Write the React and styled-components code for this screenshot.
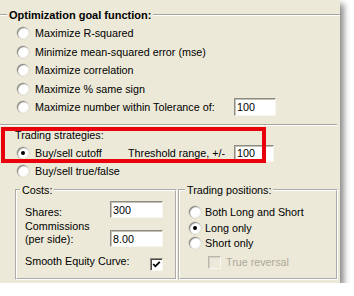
import React from 'react';
import styled, { createGlobalStyle } from 'styled-components';

const GlobalStyle = createGlobalStyle`
  html, body {
    margin: 0;
    padding: 0;
    background: #ffffff;
  }
  body {
    font-family: "Liberation Sans", Arial, sans-serif;
    font-size: 10.75px;
    color: #000000;
  }
`;

const Panel = styled.div`
  position: relative;
  width: 340px;
  height: 283px;
  background: #ece9d8;
  box-shadow: 4px 4px 6px rgba(0, 0, 0, 0.45);
  display: flex;
  flex-direction: column;
`;

const GroupHeader = styled.div`
  display: flex;
  align-items: center;
  height: 16px;
  margin-top: 7px;
`;

const Rule = styled.div`
  flex: ${p => (p.$width ? `0 0 ${p.$width}px` : '1 1 auto')};
  height: 0;
  border-top: 1px solid #a6a599;
  border-bottom: 1px solid #ffffff;
`;

const Caption = styled.span`
  font-weight: bold;
  font-size: 11px;
  line-height: 16px;
  padding: 0 2px;
  white-space: nowrap;
`;

const OptionList = styled.div`
  display: grid;
  grid-auto-rows: 18.5px;
  padding-top: 1px;
`;

const OptionRow = styled.div`
  display: flex;
  align-items: center;
  padding-left: ${p => (p.$indent === undefined ? 17 : p.$indent)}px;
`;

const Radio = styled.span`
  position: relative;
  flex: none;
  width: 12px;
  height: 12px;
  margin-right: ${p => p.$gap || 6}px;
  border-radius: 50%;
  background: #ffffff;
  box-shadow: inset 1px 1px 1px #7d7c74, inset -1px -1px 0 #f4f3ee, 0 0 0 0.5px #c9c7bb;

  &::after {
    content: '';
    display: ${p => (p.$checked ? 'block' : 'none')};
    position: absolute;
    left: 4px;
    top: 4px;
    width: 4px;
    height: 4px;
    border-radius: 50%;
    background: #000000;
  }
`;

const Label = styled.span`
  flex: none;
  white-space: nowrap;
  width: ${p => (p.$width ? `${p.$width}px` : 'auto')};
  color: ${p => (p.$disabled ? '#aca899' : '#000000')};
`;

const TextBox = styled.input`
  flex: none;
  box-sizing: border-box;
  width: ${p => p.$width}px;
  height: ${p => p.$height || 17}px;
  margin: 0;
  padding: 0 2px;
  font: inherit;
  color: #000000;
  background: #ffffff;
  border: 1px solid;
  border-color: #8d8c84 #f6f5f0 #f6f5f0 #8d8c84;
  box-shadow: inset 1px 1px 0 #c3c1b6;
  outline: none;
`;

const Separator = styled(Rule)`
  flex: none;
  width: 337px;
  margin-top: 7.5px;
`;

const Strategies = styled.div`
  display: flex;
  flex-direction: column;
`;

const StrategyTitle = styled.div`
  line-height: 18px;
  padding-left: 15px;
`;

const StrategyRow = styled(OptionRow)`
  height: 18px;
`;

const BottomRow = styled.div`
  display: flex;
  gap: 1px;
  margin-top: 3px;
  padding-left: 15px;
`;

const GroupBox = styled.fieldset`
  box-sizing: border-box;
  width: ${p => p.$width}px;
  height: 97px;
  margin: 0;
  padding: 0;
  min-width: 0;
  border: 2px groove #ffffff;
`;

const Legend = styled.legend`
  margin-left: ${p => p.$indent}px;
  padding: 0 2px;
  line-height: 14px;
`;

const CostsBody = styled.div`
  display: flex;
  flex-direction: column;
  padding: 0 12px 0 8px;
`;

const CostRow = styled.div`
  display: flex;
  justify-content: space-between;
  align-items: ${p => p.$align || 'flex-start'};
  margin-top: ${p => p.$top}px;
`;

const CostLabel = styled.span`
  line-height: 13px;
  padding-top: ${p => p.$padTop || 0}px;
  padding-bottom: ${p => p.$padBottom || 0}px;
`;

const CheckBox = styled.span`
  flex: none;
  box-sizing: border-box;
  width: 13px;
  height: 13px;
  margin-top: ${p => p.$top || 0}px;
  margin-left: ${p => p.$left || 0}px;
  margin-right: ${p => p.$gap || 0}px;
  background: ${p => (p.$disabled ? '#ece9d8' : '#ffffff')};
  border: 1px solid;
  border-color: ${p => (p.$disabled ? '#b9b7ab #f7f6f1 #f7f6f1 #b9b7ab' : '#8d8c84 #f6f5f0 #f6f5f0 #8d8c84')};
  box-shadow: inset 1px 1px 0 ${p => (p.$disabled ? '#d6d3c5' : '#4a4944')};
  display: flex;
  align-items: center;
  justify-content: center;
`;

const PositionsBody = styled.div`
  display: flex;
  flex-direction: column;
  padding: 7.25px 0 0 9px;
`;

const PositionList = styled.div`
  display: grid;
  grid-auto-rows: 15.5px;
`;

const ReversalRow = styled.div`
  display: flex;
  align-items: center;
  height: 16px;
  margin-top: 3.25px;
`;

const Highlight = styled.div`
  position: absolute;
  left: 1px;
  top: 127px;
  width: 265px;
  height: 36px;
  box-sizing: border-box;
  border: 4px solid #e8000b;
  pointer-events: none;
`;

const goals = [
  'Maximize R-squared',
  'Minimize mean-squared error (mse)',
  'Maximize correlation',
  'Maximize % same sign',
];

const positions = [
  { text: 'Both Long and Short', checked: false },
  { text: 'Long only', checked: true },
  { text: 'Short only', checked: false },
];

function Check() {
  return (
    <svg width="9" height="9" viewBox="0 0 9 9">
      <polyline points="1.2,4 3.4,6.3 7.8,1.8" fill="none" stroke="#000" strokeWidth="1.8" />
    </svg>
  );
}

export default function App() {
  return (
    <>
      <GlobalStyle />
      <Panel>
        <GroupHeader>
          <Rule $width={7} />
          <Caption>Optimization goal function:</Caption>
          <Rule />
        </GroupHeader>
        <OptionList>
          {goals.map(g => (
            <OptionRow key={g}>
              <Radio />
              <Label>{g}</Label>
            </OptionRow>
          ))}
          <OptionRow>
            <Radio />
            <Label $width={199}>Maximize number within Tolerance of:</Label>
            <TextBox $width={42} $height={18} defaultValue="100" />
          </OptionRow>
        </OptionList>

        <Separator />

        <Strategies>
          <StrategyTitle>Trading strategies:</StrategyTitle>
          <StrategyRow>
            <Radio $checked />
            <Label $width={93}>Buy/sell cutoff</Label>
            <Label $width={106}>Threshold range, +/-</Label>
            <TextBox $width={40} defaultValue="100" />
          </StrategyRow>
          <StrategyRow>
            <Radio />
            <Label>Buy/sell true/false</Label>
          </StrategyRow>
        </Strategies>

        <BottomRow>
          <GroupBox $width={162}>
            <Legend $indent={3}>Costs:</Legend>
            <CostsBody>
              <CostRow $top={4}>
                <CostLabel $padTop={5}>Shares:</CostLabel>
                <TextBox $width={53} defaultValue="300" />
              </CostRow>
              <CostRow $top={1} $align="flex-end">
                <CostLabel $padBottom={1}>
                  Commissions
                  <br />
                  (per side):
                </CostLabel>
                <TextBox $width={53} defaultValue="8.00" />
              </CostRow>
              <CostRow $top={8}>
                <CostLabel>Smooth Equity Curve:</CostLabel>
                <CheckBox $top={3}>
                  <Check />
                </CheckBox>
              </CostRow>
            </CostsBody>
          </GroupBox>

          <GroupBox $width={160}>
            <Legend $indent={5}>Trading positions:</Legend>
            <PositionsBody>
              <PositionList>
                {positions.map(p => (
                  <OptionRow key={p.text} $indent={0}>
                    <Radio $checked={p.checked} $gap={4} />
                    <Label>{p.text}</Label>
                  </OptionRow>
                ))}
              </PositionList>
              <ReversalRow>
                <CheckBox $disabled $left={19} $gap={5} />
                <Label $disabled>True reversal</Label>
              </ReversalRow>
            </PositionsBody>
          </GroupBox>
        </BottomRow>

        <Highlight />
      </Panel>
    </>
  );
}
